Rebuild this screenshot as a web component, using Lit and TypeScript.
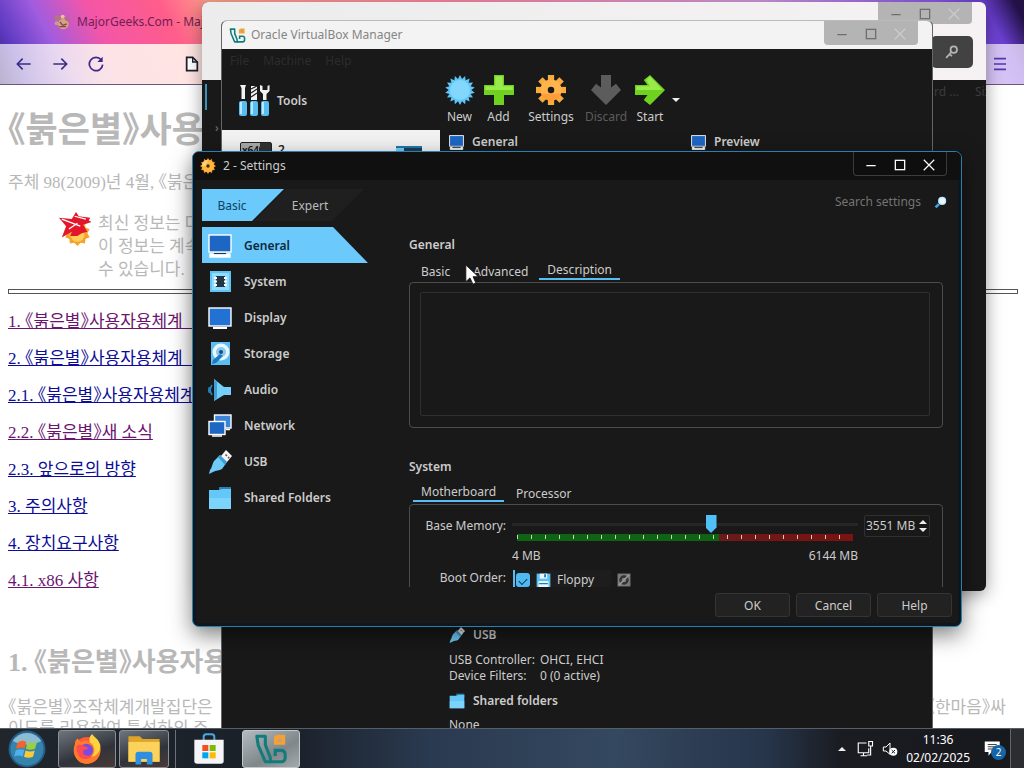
import { LitElement, html, svg, css, nothing } from "lit";
import { customElement, property, state } from "lit/decorators.js";
import { classMap } from "lit/directives/class-map.js";

const burst = (n: number, r1: number, r2: number, c: number) =>
  Array.from({ length: n * 2 }, (_, i) => {
    const r = i % 2 ? r2 : r1;
    const a = (Math.PI * i) / n;
    return `${(c + r * Math.sin(a)).toFixed(1)},${(c - r * Math.cos(a)).toFixed(1)}`;
  }).join(" ");

const icons: Record<string, unknown> = {
  monitor: svg`<rect x="1" y="1" width="22" height="17" fill="#1d66c4" stroke="#fff" stroke-width="1.400"/><path d="M2 23v-3h3l1 1h12l1-1h3v3z" fill="#fff" stroke="#fff" stroke-width="1.400"/><path d="M6 19.500h12" stroke="#234" stroke-width="1"/>`,
  display: svg`<rect x="1" y="2" width="22" height="18" fill="#2272d4" stroke="#fff" stroke-width="1.400"/><path d="M5 21h14v2H5z" fill="#fff"/>`,
  chip: svg`<rect x="2" y="1" width="21" height="21" fill="#5fc4f5"/><rect x="4" y="3" width="17" height="17" fill="#8fdcff"/><rect x="8" y="6" width="9" height="11" fill="#243642"/><path d="M6 8h3M6 11.500h3M6 15h3M16 8h3M16 11.500h3M16 15h3" stroke="#fff" stroke-width="1.800"/>`,
  disk: svg`<rect x="3" y="0" width="19" height="23" fill="#5cbdf2"/><circle cx="13" cy="10" r="8.500" fill="#e8f7ff"/><circle cx="13" cy="10" r="5" fill="#8cc8ea"/><circle cx="13" cy="10" r="2" fill="#16507f"/><path d="M12 12l3 2-7 7-4 1 1-4z" fill="#1b78c2"/>`,
  speaker: svg`<path d="M6 1l10 8h7v8h-7L6 23z" fill="#74cffa"/><path d="M6 1v22l3-3V4z" fill="#3e9fd6"/><path d="M4 7c-2 3-2 7 0 10M1.500 9c-1 2-1 4 0 6" stroke="#2c86bd" stroke-width="1.500" fill="none"/>`,
  network: svg`<rect x="6.500" y="1" width="16.500" height="13" fill="#3a85d8" stroke="#fff" stroke-width="1.400"/><rect x="1" y="7.500" width="16" height="13" fill="#1d66c4" stroke="#fff" stroke-width="1.400"/><path d="M4 22h10M18 15.500h4" stroke="#fff" stroke-width="1.500"/>`,
  usb: svg`<path d="M12 5l7 7-5 7c-3 2-6 1-9 3l-4 2 1-4c2-2 2-6 4-9z" fill="#6fccfa"/><path d="M12 5l7 7-2 3-7-8z" fill="#3d9cd0"/><path d="M18 0l6 6-5 6-6-6z" fill="#f4f4f4"/><path d="M17.500 4.500l1.500 1.500M20 7l1.300 1.300" stroke="#555" stroke-width="1.500"/>`,
  folder: svg`<path d="M11 1h12v5H11z" fill="#2d7eb5"/><path d="M1 4h10l3-1h9v20H1z" fill="#63c8f8"/><path d="M1 12h22v11H1z" fill="#8edcff" opacity=".6"/>`,
  gear: svg`<polygon points="${burst(12, 12, 9, 12)}" fill="#f59a26"/><circle cx="12" cy="12" r="9" fill="#ffb83d"/><path d="M12 3a9 9 0 0 0-9 9h6z" fill="#ffd27a"/><circle cx="12" cy="12" r="2.600" fill="#4a2a08"/>`,
  cog: svg`<g fill="#f9ab3c">${[0, 45, 90, 135].map((d) => svg`<rect x="9.500" y="0" width="5" height="24" transform="rotate(${d} 12 12)"/>`)}</g><circle cx="12" cy="12" r="8.500" fill="#ffb44d"/><path d="M4 15a8.500 8.500 0 0 0 16 0z" fill="#ff8f2c" opacity=".6"/><circle cx="12" cy="12" r="2.600" fill="#191919"/>`,
  burst: svg`<polygon points="${burst(18, 12, 9, 12)}" fill="#5fc6f8"/><circle cx="12" cy="12" r="8" fill="#83d6fc"/>`,
  plus: svg`<path d="M8 0h8v8h8v8h-8v8H8v-8H0V8h8z" fill="#6fd21e"/><path d="M9 1h6v8h8v3H1V9h8z" fill="#9aea4b"/>`,
  down: svg`<path d="M8 0h8v10l4-3 4 5-12 12L0 12l4-5 4 3z" fill="#5c5c5c"/>`,
  go: svg`<path d="M0 8h10L7 4l5-4 12 12-12 12-5-4 3-4H0z" fill="#6fd21e"/><path d="M1 9h11L9 4l3-3 10 11H1z" fill="#9aea4b"/>`,
  tools: svg`<path d="M2 0h6l-1 3v11H3.500V3zM13 1h6v14h-6z" fill="#f2f2f2"/><path d="M13 4l6-3M13 8l6-4M13 12l6-4" stroke="#222" stroke-width="1.300"/><path d="M22 0v6l3 3v6h3.500V9l3-3V0l-2 1v4h-5V1z" fill="#f2f2f2"/><g fill="#58bdf0"><rect x="1" y="16" width="8" height="15" rx="2"/><rect x="12" y="16" width="8" height="15" rx="2"/><rect x="23" y="16" width="8" height="15" rx="2"/></g><path d="M3 17v12M14 17v12M25 17v12" stroke="#b8e8ff" stroke-width="2"/>`,
  vbox: svg`<path d="M2 3h6v6l3.500 9v3H8L3 9.500z" fill="none" stroke="#127c7c" stroke-width="2.200" stroke-linejoin="round"/><path d="M11 21h8q3 0 3-3v-2q0-3-3-3h-4v4" fill="none" stroke="#127c7c" stroke-width="2.200"/><path d="M14 5q0-3 3-3h5v7h-8z" fill="#f6a136"/><path d="M17 5h2.500v2H17z" fill="#b9a184"/>`,
  floppy: svg`<rect x="1" y="1" width="22" height="22" fill="#5cc0f5"/><rect x="6" y="1" width="12" height="8" fill="#e9f8ff"/><rect x="13" y="2" width="3" height="5" fill="#277ab0"/><rect x="4" y="13" width="16" height="10" fill="#e9f8ff"/><path d="M5 17h14" stroke="#277ab0" stroke-width="2"/>`,
  dim: svg`<rect x="1" y="1" width="22" height="22" fill="#7a7a7a"/><circle cx="12" cy="12" r="6" fill="none" stroke="#333" stroke-width="4"/><path d="M3 21L21 3" stroke="#999" stroke-width="3"/>`,
  min: svg`<path d="M4 13h16" stroke="currentColor" stroke-width="2"/>`,
  max: svg`<rect x="4" y="4" width="16" height="16" fill="none" stroke="currentColor" stroke-width="2.200"/>`,
  close: svg`<path d="M3 3l18 18M21 3L3 21" stroke="currentColor" stroke-width="2"/>`,
  lens: svg`<circle cx="15" cy="9" r="7.500" fill="#bfe9ff"/><circle cx="15" cy="9" r="5" fill="#e9f9ff"/><path d="M9 15l-6 6" stroke="#39a6e8" stroke-width="5"/>`,
  key: svg`<circle cx="15" cy="8" r="5.500" fill="none" stroke="#b5b5b5" stroke-width="3"/><path d="M11 12l-9 10M8 16l4 3" stroke="#b5b5b5" stroke-width="3"/>`,
  back: svg`<path d="M22 12H3M10 4l-8 8 8 8" fill="none" stroke="currentColor" stroke-width="2.400"/>`,
  forward: svg`<path d="M2 12h19M14 4l8 8-8 8" fill="none" stroke="currentColor" stroke-width="2.400"/>`,
  reload: svg`<path d="M20 6a10 10 0 1 0 2 7" fill="none" stroke="currentColor" stroke-width="2.600"/><path d="M22 1v8h-8z" fill="currentColor"/>`,
  page: svg`<path d="M4 2h9l7 7v13H4z" fill="#fff" stroke="currentColor" stroke-width="2.600"/><path d="M13 2v7h7" fill="none" stroke="currentColor" stroke-width="2"/>`,
  menu: svg`<path d="M3 4h18M3 12h18M3 20h18" stroke="currentColor" stroke-width="2.400"/>`,
  paw: svg`<circle cx="14" cy="15" r="8" fill="#d9a27c"/><circle cx="5" cy="6" r="4" fill="#b07a7c"/><circle cx="13" cy="4" r="3" fill="#e6c48c"/><circle cx="20" cy="8" r="3" fill="#a9766f"/><circle cx="4" cy="14" r="3" fill="#c7a08c"/><path d="M9 12l4 5 6-2M8 19h10" stroke="#7a4a5c" stroke-width="2" fill="none"/>`,
  emblem: svg`<polygon points="${burst(10, 9, 7, 9)}" fill="#f4a42c" transform="translate(4 6)"/><circle cx="13" cy="16" r="5" fill="#ffcf5a"/><path d="M0 4l9 1 3-5 2 3 8 1-1 2 2 1-6 2 3 5-4 1-3 2-5 0 1-3-7 4 3-8z" fill="#e3162a"/><path d="M2 5l13 5M11 3l8 2M7 12l6-4" stroke="#fff" stroke-width=".9"/>`,
  orb: svg`<circle cx="12" cy="12" r="11.700" fill="#245b86"/><circle cx="12" cy="12" r="10.500" fill="#3584ae"/><path d="M3 7a10.500 10.500 0 0 1 18 0c-5 3-13 3-18 0z" fill="#a9cddd" opacity=".75"/><path d="M6 8q3-2 5.500-.5l-1 4.300Q8 10.600 5 12z" fill="#f0642e"/><path d="M12.300 7.700q3 1.500 6-.2l-1.200 4.300q-3 1.400-5.800 0z" fill="#9ad03b"/><path d="M4.800 12.900q3-1.400 5.500-.2l-1 4q-2.600-1.200-5.300 0z" fill="#4fb0ee"/><path d="M11.100 12.900q3 1.300 5.800 0l-1.100 4q-3 1.300-5.700 0z" fill="#fdc934"/>`,
  firefox: svg`<circle cx="12" cy="13" r="10" fill="#ff5a36"/><path d="M3 8C0 17 6 24 13 23c8-1 11-9 8-15-1-3-4-4-5-7-3 2-2 5-2 6-3-2-6-1-7 0L5 4C3 6 3 7 3 8z" fill="#ff7a2a"/><path d="M16 1c-3 2-2 5-2 6 4 2 5 8 1 11 5 0 9-7 6-11-1-3-4-4-5-6z" fill="#ffd23e"/><circle cx="11.500" cy="13" r="5" fill="#7b4be0"/><path d="M4 10c2-2 5-1 6 0l3 1c-1 2-4 1-4 3 0 3 5 4 7 2-1 4-8 5-10 1-1-2-2-4-2-7z" fill="#ff4a4f"/>`,
  explorer: svg`<path d="M1 3h8l2 2h12v16H1z" fill="#e0a526"/><path d="M1 7h22v14H1z" fill="#fbd35c"/><path d="M6 23v-7q0-2 2-2h8q2 0 2 2v7h-4v-4h-4v4z" fill="#2f8fe0"/>`,
  store: svg`<path d="M8 6V3q0-2 2-2h4q2 0 2 2v3" fill="none" stroke="#4ba7dd" stroke-width="1.500"/><path d="M1 5h22v16q0 2-2 2H3q-2 0-2-2z" fill="#f5f5f7"/><path d="M7 9h4.500v4.500H7z" fill="#f25022"/><path d="M12.500 9H17v4.500h-4.500z" fill="#7fba00"/><path d="M7 14.500h4.500V19H7z" fill="#00a4ef"/><path d="M12.500 14.500H17V19h-4.500z" fill="#ffb900"/>`,
  lan: svg`<path d="M14 4H3v13h14v-6M6 21h9M10 17v4" fill="none" stroke="#fff" stroke-width="1.500"/><path d="M17 2h5v6h-5zM19.500 8v12H15" fill="none" stroke="#fff" stroke-width="1.500"/>`,
  mute: svg`<path d="M2 9h4l6-6v17l-6-5H2z" fill="none" stroke="#fff" stroke-width="1.500"/><circle cx="17" cy="16" r="6" fill="#fff"/><path d="M14.500 13.500l5 5M19.500 13.500l-5 5" stroke="#222" stroke-width="1.500"/>`,
  notes: svg`<path d="M1 2h20v14H10l-4 5v-5H1z" fill="#fff"/><path d="M5 6h12M5 9h12M5 12h12" stroke="#444" stroke-width="1.500"/>`,
  pointer: svg`<path d="M1 0v20l5-4.500L9.500 23l3.500-1.500L9.700 14H16z" fill="#fff" stroke="#111" stroke-width="1"/>`,
};

const icon = (name: string, size: number) =>
  html`<svg width=${size} height=${size} viewBox=${name === "tools" ? "0 0 32 32" : "0 0 24 24"} aria-hidden="true">${icons[name] ?? nothing}</svg>`;

const shared = css`
  * { box-sizing: border-box; }
  :host { font: 12px/16px "Noto Sans", "Open Sans", sans-serif; }
  svg { display: block; flex: none; }
  button { font: inherit; color: inherit; background: none; border: 0; padding: 0; }
  input, textarea { font: inherit; color: inherit; }
  a { color: inherit; }
`;

@customElement("caption-buttons")
class CaptionButtons extends LitElement {
  @property({ type: Boolean, reflect: true }) active = false;
  static styles = [shared, css`
    :host { display: flex; align-items: center; justify-content: space-around; width: 94px; height: 24px; padding: 2px 3px 0;
      color: #6e6e6e; background: #b4b4b4; border-radius: 0 0 4px 4px; }
    :host([active]) { color: #fff; background: #0e0e0e; border: 1px solid #3c3c3c; border-top: 0; }
    :host(:not([active])) button:last-child { color: #ccc; }
  `];
  render() {
    return html`<button aria-label="Minimize">${icon("min", 14)}</button>
      <button aria-label="Maximize">${icon("max", 14)}</button>
      <button aria-label="Close">${icon("close", 14)}</button>`;
  }
}

@customElement("web-browser")
class WebBrowser extends LitElement {
  static styles = [shared, css`
    :host { display: flex; flex-direction: column; overflow: hidden; color: #b8b8b8; background: #fff; }
    .chrome { background: linear-gradient(62deg, #33206f 0, #5c3ac0 3%, #a05ce0 7%, #f356a8 12%, #ff5d8a 19%, #ffa08a 24%, #ff86a0 45%, #d39adf 75%, #8a55e8 92%, #6a3fd0 96%, #221046 99%); }
    .tabs { height: 44px; display: flex; align-items: center; gap: 7px; padding-left: 54px; color: #6f1f55; }
    .bar { height: 41px; display: flex; align-items: center; gap: 20px; padding: 0 16px; color: #3b2b86;
      background: linear-gradient(90deg, rgba(255,255,255,.66) 0, rgba(255,250,240,.86) 10%, rgba(255,246,238,.9) 70%, rgba(240,230,255,.76) 100%); border-bottom: 1px solid #6d5580; }
    .page { color: #1f1f2b; margin-left: 60px; }
    .menu { margin-left: auto; color: #5a35b5; }
    .doc { flex: 1; min-height: 0; overflow: hidden; padding: 26px 6px 0 8px; font: 17px/21px "Liberation Serif", "Noto Sans CJK KR", serif; white-space: nowrap; font-feature-settings: "halt"; }
    h1 { margin: 0; font-size: 35px; line-height: 40px; }
    h2 { margin: 56px 0 18px; font-size: 26px; line-height: 32px; }
    p { margin: 0; }
    .date { margin: 21px 0 19px; }
    .note { display: flex; gap: 5px; padding-left: 51px; line-height: 23px; }
    hr { margin: 8px 0 17px; height: 5px; border: 1px solid #555; }
    .toc { display: flex; flex-direction: column; align-items: flex-start; gap: 16px; }
    a { color: #0c0c96; }
    a.seen { color: #6b1470; }
    .spread { display: flex; justify-content: space-between; padding-right: 12px; }
  `];
  render() {
    const toc: [string, boolean][] = [
      ["1. 《붉은별》사용자용체계\u00a0\u00a0안내", true], ["2. 《붉은별》사용자용체계\u00a0\u00a0구성", false], ["2.1. 《붉은별》사용자용체계", false],
      ["2.2. 《붉은별》새 소식", true], ["2.3. 앞으로의 방향", false], ["3. 주의사항", false], ["4. 장치요구사항", false], ["4.1. x86 사항", true]];
    return html`
      <div class="chrome">
        <div class="tabs">${icon("paw", 16)}<span>MajorGeeks.Com - MajorGeeks</span></div>
        <div class="bar">
          <button aria-label="Back">${icon("back", 16)}</button>
          <button aria-label="Forward">${icon("forward", 16)}</button>
          <button aria-label="Reload">${icon("reload", 16)}</button>
          <span class="page">${icon("page", 16)}</span>
          <button class="menu" aria-label="Menu">${icon("menu", 16)}</button>
        </div>
      </div>
      <div class="doc">
        <h1>《붉은별》사용자용체계</h1>
        <p class="date">주체 98(2009)년 4월, 《붉은별》</p>
        <div class="note">${icon("emblem", 34)}<p>최신 정보는 다음<br>이 정보는 계속<br>수 있습니다.</p></div>
        <hr>
        <nav class="toc">${toc.map(([t, seen]) => html`<a href="#" class=${classMap({ seen })}>${t}</a>`)}</nav>
        <h2>1. 《붉은별》사용자용체계</h2>
        <p class="spread"><span>《붉은별》조작체계개발집단은</span><span>《한마음》싸</span></p>
        <p>이도를 리용하여 특성하의 주</p>
      </div>`;
  }
}

@customElement("back-window")
class BackWindow extends LitElement {
  static styles = [shared, css`
    :host { display: flex; flex-direction: column; overflow: hidden; background: #191919; border-radius: 6px; box-shadow: 0 4px 18px rgba(0,0,0,.4); }
    .head { height: 78px; display: flex; flex-direction: column; align-items: flex-end; gap: 12px; background: linear-gradient(90deg, #ececec, #f6f2f4); padding-right: 13px; }
    .key { display: grid; place-items: center; width: 42px; height: 32px; background: #424242; border-radius: 5px; }
    .row { display: flex; justify-content: space-between; padding: 4px 0 0 3px; color: #3c3c3c; }
    .mark { width: 2px; height: 26px; background: #3c91b8; }
    .cols { display: flex; gap: 16px; width: 52px; overflow: hidden; white-space: nowrap; }
    .chev { padding: 10px 0 0 13px; color: #777; }
    caption-buttons { height: 22px; margin-right: 1px; }
  `];
  render() {
    return html`<div class="head"><caption-buttons></caption-buttons><button class="key" aria-label="Key">${icon("key", 14)}</button></div>
      <div class="row"><span class="mark"></span><span class="cols"><span>rd ...</span><span>Size</span></span></div>
      <div class="chev">›</div>`;
  }
}

@customElement("manager-window")
class ManagerWindow extends LitElement {
  static styles = [shared, css`
    :host { display: flex; flex-direction: column; overflow: hidden; color: #ccc; background: #191919; border: 1px solid #666; border-top-color: #bbb; border-bottom: 0; border-radius: 6px 6px 0 0; }
    .title { height: 28px; flex: none; display: flex; justify-content: space-between; padding-right: 14px; color: #858585; background: #f3f3f3; }
    .name { display: flex; align-items: center; gap: 5px; padding-left: 7px; }
    .menu { height: 24px; display: flex; gap: 14px; padding: 4px 8px; color: #2c2c2c; }
    .main { flex: 1; min-height: 0; display: flex; }
    .side { flex: none; width: 218px; }
    .tools { height: 57px; display: flex; align-items: center; gap: 7px; padding: 0 0 2px 16px; font-weight: 600; }
    .vm { height: 48px; display: flex; padding: 12px 18px; gap: 6px; color: #222; background: #f2f2f2; font-weight: 600; }
    .arch { width: 32px; height: 28px; font-size: 10px; line-height: 14px; color: #111; background: linear-gradient(100deg, #aaa 55%, #333 56%); border: 1px solid #222; border-radius: 2px; padding-left: 1px; }
    .run { margin: 4px 0 0 auto; width: 26px; height: 16px; background: linear-gradient(90deg, #7accf4 8px, #223c4c 8px); border-top: 2px solid #1e78ac; }
    .content { flex: 1; min-width: 0; display: flex; flex-direction: column; }
    .bar { display: flex; height: 60px; }
    .tool { display: flex; flex-direction: column; align-items: center; gap: 4px; width: 39px; padding-top: 2px; }
    .wide { width: 66px; }
    .mid { width: 44px; }
    .off { color: #5c5c5c; }
    .more { align-self: flex-start; margin-top: 25px; border: 4px solid transparent; border-top-color: #eee; }
    .cards { display: grid; grid-template-columns: 242px 1fr; padding-left: 9px; }
    h3 { display: flex; align-items: center; gap: 8px; margin: 0; font-size: 12px; line-height: 18px; font-weight: 600; }
    .details { margin-top: auto; display: flex; flex-direction: column; gap: 8px; padding-left: 9px; }
    dl { display: grid; grid-template-columns: 91px 1fr; margin: 0; }
    dd { margin: 0; }
    p { margin: 0; line-height: 14px; }
  `];
  render() {
    const tools: [string, string, string][] = [["burst", "New", ""], ["plus", "Add", ""], ["cog", "Settings", "wide"], ["down", "Discard", "mid off"], ["go", "Start", "mid"]];
    return html`
      <div class="title"><span class="name">${icon("vbox", 17)}Oracle VirtualBox Manager</span><caption-buttons></caption-buttons></div>
      <div class="menu"><span>File</span><span>Machine</span><span>Help</span></div>
      <div class="main">
        <div class="side">
          <div class="tools">${icon("tools", 32)}<span>Tools</span></div>
          <div class="vm"><span class="arch">x64</span><span>2</span><span class="run"></span></div>
        </div>
        <div class="content">
          <div class="bar">${tools.map(([i, t, c]) => html`<button class="tool ${c}">${icon(i, 30)}<span>${t}</span></button>`)}<span class="more"></span></div>
          <div class="cards"><h3>${icon("monitor", 15)}General</h3><h3>${icon("monitor", 15)}Preview</h3></div>
          <div class="details">
            <h3>${icon("usb", 16)}USB</h3>
            <dl><dt>USB Controller:</dt><dd>OHCI, EHCI</dd><dt>Device Filters:</dt><dd>0 (0 active)</dd></dl>
            <h3>${icon("folder", 16)}Shared folders</h3>
            <p>None</p>
          </div>
        </div>
      </div>`;
  }
}

@customElement("settings-dialog")
class SettingsDialog extends LitElement {
  @state() private page = "General";
  static styles = [shared, css`
    :host { display: flex; flex-direction: column; overflow: hidden; color: #ccc; background: #191919; border: 1px solid #2a7fae; border-radius: 7px; box-shadow: 0 8px 22px rgba(0,0,0,.5), inset 0 0 0 3px #0d171d; }
    .title { height: 28px; flex: none; display: flex; justify-content: space-between; padding: 0 14px 0 7px; background: #101010; }
    .name { display: flex; align-items: center; gap: 7px; }
    .modes { flex: none; display: flex; justify-content: space-between; padding: 9px 14px 0 9px; }
    .tabs { display: flex; height: 32px; }
    .mode { width: 82px; padding: 2px 22px 0 0; color: #0b4266; background: #6cc9fb; clip-path: polygon(0 0, 100% 0, 50px 100%, 0 100%); }
    .expert { width: 110px; margin-left: -30px; padding: 2px 4px 0 6px; color: #bbb; background: #1f1f1f; clip-path: polygon(32px 0, 100% 0, 78px 100%, 0 100%); }
    .find { display: flex; align-items: center; height: 26px; }
    .find input { width: 93px; background: none; border: 0; padding: 0; outline: 0; margin-right: 6px; }
    .find input::placeholder { color: #747474; opacity: 1; }
    .body { flex: 1; min-height: 0; display: flex; gap: 41px; padding: 6px 18px 0 9px; }
    .nav { flex: none; width: 166px; display: flex; flex-direction: column; }
    .item { height: 36px; display: flex; align-items: center; gap: 12px; padding: 1px 0 0 6px; font-weight: 600; }
    .item.on { color: #0d2a3c; background: #6cc9fb; clip-path: polygon(0 0, 131px 0, 100% 100%, 0 100%); }
    .panel { flex: 1; min-width: 0; overflow: hidden; padding-top: 10px; }
    h2 { margin: 0; font-size: 12px; line-height: 16px; font-weight: 600; }
    .strip { display: flex; height: 22px; margin-top: 7px; }
    .strip button { padding: 2px 11px 0 12px; height: 22px; }
    .strip .on { height: 20px; padding: 1px 8px 0; border-bottom: 2px solid #58bdf0; }
    .strip.second { padding-left: 4px; }
    .group { border: 1px solid #4c4c4c; border-radius: 4px; padding: 9px 12px 12px 10px; }
    .general { height: 146px; margin-bottom: 31px; }
    textarea { display: block; width: 100%; height: 124px; resize: none; background: #191919; border: 1px solid #2f2f2f; border-radius: 2px; }
    .system { display: grid; grid-template-columns: 87px minmax(0, 1fr) 66px; column-gap: 6px; height: 150px; padding: 10px 12px 10px 9px; align-content: start; }
    .lab { text-align: right; padding-top: 3px; white-space: nowrap; }
    .lab.low { padding-top: 6px; }
    input[type="range"] { appearance: none; display: block; width: 100%; height: 18px; margin: 0; background: linear-gradient(#262626, #262626) 0 8px / 100% 3px no-repeat; }
    input[type="range"]::-webkit-slider-thumb { appearance: none; width: 11px; height: 18px; background: #4fc0f8; clip-path: polygon(0 0, 100% 0, 100% 70%, 50% 100%, 0 70%); }
    .scale { height: 7px; margin: 1px 5px 7px; background:
      repeating-linear-gradient(90deg, #c9d6b4 0 1px, transparent 1px 14px) 0 1px / 100% 4px no-repeat,
      linear-gradient(90deg, #0e6414 60%, #6b1a1a 60%, #7c1212); }
    .ends { display: flex; justify-content: space-between; }
    .spin { display: flex; height: 22px; border: 1px solid #303030; border-radius: 2px; }
    .spin input { flex: 1; min-width: 0; padding: 0 0 0 1px; background: none; border: 0; }
    .arrows { flex: none; display: flex; flex-direction: column; justify-content: center; gap: 4px; padding-right: 2px; }
    .arrows button { border: 4px solid transparent; }
    .up { border-top-width: 0 !important; border-bottom-color: #eee !important; }
    .dn { border-bottom-width: 0 !important; border-top-color: #eee !important; }
    .boot { display: flex; align-items: center; gap: 6px; height: 24px; padding-left: 1px; margin-top: 4px; }
    .opt { display: flex; align-items: center; gap: 6px; width: 98px; height: 20px; border-left: 2px solid #58bdf0; background: #1d1d1d; }
    .opt input { appearance: none; width: 14px; height: 14px; margin: 0 0 0 1px; background: #4fb9f2; border-radius: 3px; display: grid; place-items: center; }
    .opt input::after { content: ""; width: 7px; height: 4px; border: solid #123a55; border-width: 0 0 1px 1px; transform: rotate(-45deg); }
    .foot { flex: none; display: flex; justify-content: flex-end; gap: 6px; padding: 6px 9px 9px; }
    .foot button { width: 75px; height: 24px; padding-top: 1px; background: #222; border: 1px solid #343434; border-radius: 3px; }
  `];
  render() {
    const pages: [string, string][] = [["General", "monitor"], ["System", "chip"], ["Display", "display"], ["Storage", "disk"], ["Audio", "speaker"], ["Network", "network"], ["USB", "usb"], ["Shared Folders", "folder"]];
    return html`
      <div class="title"><span class="name">${icon("gear", 16)}2 - Settings</span><caption-buttons active></caption-buttons></div>
      <div class="modes">
        <div class="tabs"><button class="mode">Basic</button><button class="expert">Expert</button></div>
        <label class="find"><input type="text" placeholder="Search settings" aria-label="Search settings">${icon("lens", 13)}</label>
      </div>
      <div class="body">
        <nav class="nav">${pages.map(([t, i]) => html`<button class=${classMap({ item: true, on: this.page === t })} @click=${() => (this.page = t)}>${icon(i, 24)}${t}</button>`)}</nav>
        <section class="panel">
          <h2>General</h2>
          <div class="strip"><button>Basic</button><button>Advanced</button><button class="on">Description</button></div>
          <div class="group general"><textarea aria-label="Description"></textarea></div>
          <h2>System</h2>
          <div class="strip second"><button class="on">Motherboard</button><button>Processor</button></div>
          <div class="group system">
            <label class="lab" for="mem">Base Memory:</label>
            <div>
              <input id="mem" type="range" min="4" max="6144" .value=${"3551"}>
              <div class="scale"></div>
              <div class="ends"><span>4 MB</span><span>6144 MB</span></div>
            </div>
            <div class="spin"><input type="text" aria-label="Base memory size" .value=${"3551 MB"}><span class="arrows"><button class="up" aria-label="Increase"></button><button class="dn" aria-label="Decrease"></button></span></div>
            <span class="lab low">Boot Order:</span>
            <div class="boot"><label class="opt"><input type="checkbox" checked>${icon("floppy", 15)}Floppy</label>${icon("dim", 14)}</div>
          </div>
        </section>
      </div>
      <div class="foot"><button>OK</button><button>Cancel</button><button>Help</button></div>`;
  }
}

@customElement("task-bar")
class TaskBar extends LitElement {
  static styles = [shared, css`
    :host { display: flex; align-items: center; color: #fff; border-top: 1px solid #555f6a;
      background: linear-gradient(90deg, #20262c 0, #1a2029 28%, #2a3a50 42%, #34485f 60%, #26354a 75%, #1a1c22 82%, #17181c 100%); }
    .orb { padding: 0 12px 0 8px; }
    .apps { display: flex; gap: 3px; }
    .app { display: grid; place-items: center; width: 58px; height: 38px; border-radius: 3px; }
    .open { border: 1px solid #8b9096; background: linear-gradient(160deg, #6f757b, #30343a 60%, #4a3a36); }
    .files { width: 50px; }
    .stack { border-right: 1px solid #6c7278; width: 4px; }
    .plain { width: 60px; }
    .current { border: 1px solid #c3c8cc; background: linear-gradient(150deg, #b4babd, #7f878b 60%, #a4aaad); }
    .tray { margin-left: auto; display: flex; align-items: center; gap: 8px; }
    .up { border: 4px solid transparent; border-top: 0; border-bottom-color: #eee; margin-right: 2px; }
    .clock { display: flex; flex-direction: column; align-items: center; line-height: 18px; }
    .notes { position: relative; margin-left: 6px; }
    .badge { position: absolute; left: 7px; top: 5px; width: 15px; height: 15px; border-radius: 8px; background: #1565a8; font-size: 10px; line-height: 15px; text-align: center; }
    .peek { width: 14px; height: 39px; border-left: 1px solid #666; background: #2c2d31; }
  `];
  render() {
    return html`
      <button class="orb" aria-label="Start">${icon("orb", 38)}</button>
      <div class="apps">
        <button class="app open" aria-label="Firefox">${icon("firefox", 32)}</button>
        <button class="app open files" aria-label="File Explorer">${icon("explorer", 34)}</button>
        <span class="stack"></span>
        <button class="app plain" aria-label="Store">${icon("store", 32)}</button>
        <button class="app current" aria-label="VirtualBox">${icon("vbox", 34)}</button>
      </div>
      <div class="tray">
        <span class="up"></span>${icon("lan", 18)}${icon("mute", 16)}
        <span class="clock"><span>11:36</span><span>02/02/2025</span></span>
        <button class="notes" aria-label="Notifications">${icon("notes", 18)}<span class="badge">2</span></button>
        <span class="peek"></span>
      </div>`;
  }
}

@customElement("app-root")
class AppRoot extends LitElement {
  static styles = [shared, css`
    :host { display: flex; flex-direction: column; height: 100vh; overflow: hidden; }
    .desk { position: relative; flex: 1; min-height: 0; overflow: hidden; display: flex; }
    web-browser { flex: 1; }
    back-window { position: absolute; inset: 2px 38px 137px 202px; }
    manager-window { position: absolute; inset: 20px 91px -4px 221px; }
    settings-dialog { position: absolute; inset: 151px 62px 101px 192px; }
    .pointer { position: absolute; left: 465px; top: 265px; }
    task-bar { flex: none; height: 40px; }
  `];
  render() {
    return html`<div class="desk">
        <web-browser></web-browser><back-window></back-window><manager-window></manager-window><settings-dialog></settings-dialog>
        <span class="pointer">${icon("pointer", 20)}</span>
      </div><task-bar></task-bar>`;
  }
}
